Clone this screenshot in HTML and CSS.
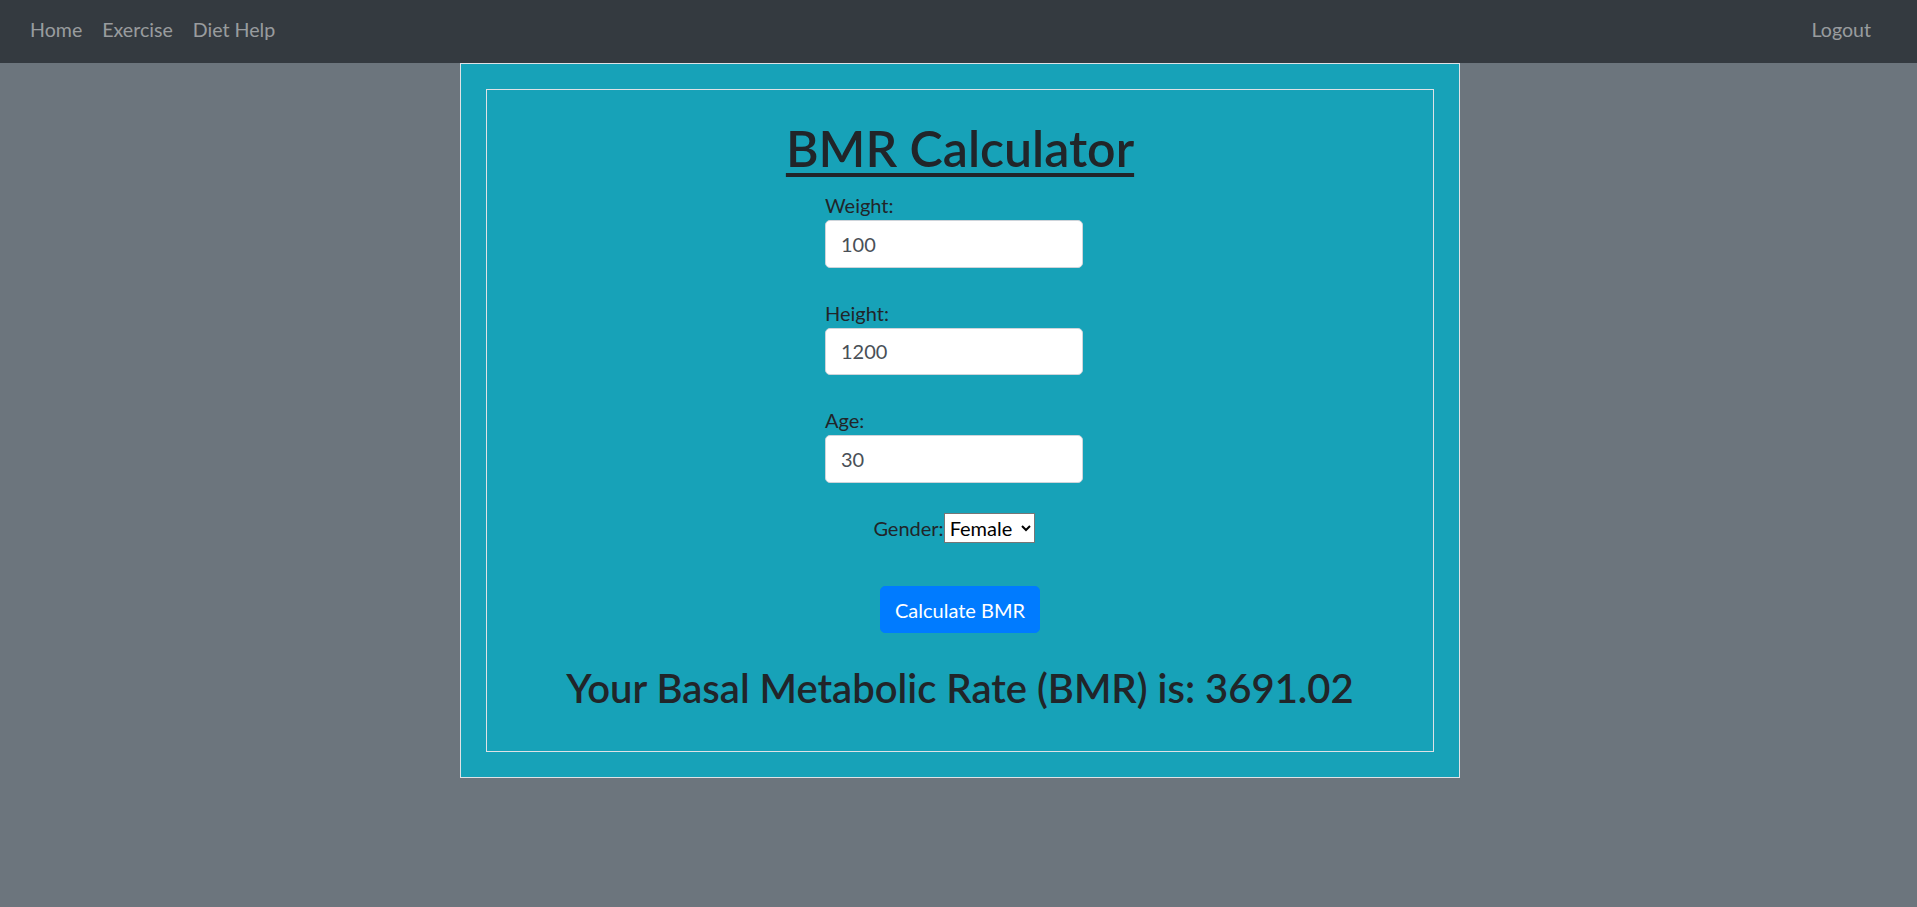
FILE: index.html
```html
<!DOCTYPE html>
<html lang="en">
<head>
<meta charset="utf-8">
<title>BMR Calculator</title>
<link rel="stylesheet" href="styles.css">
</head>
<body>
<nav class="navbar">
  <ul class="nav-left">
    <li><a class="nav-link" href="#">Home</a></li>
    <li><a class="nav-link" href="#">Exercise</a></li>
    <li><a class="nav-link" href="#">Diet Help</a></li>
  </ul>
  <ul class="nav-right">
    <li><a class="nav-link" href="#">Logout</a></li>
  </ul>
</nav>
<main class="page">
  <section class="outer-box">
    <div class="inner-box">
      <h1 class="title">BMR Calculator</h1>
      <form class="bmr-form">
        <div class="fields">
          <label class="field">
            <span class="field-label">Weight:</span>
            <input class="form-control" type="text" value="100">
          </label>
          <label class="field">
            <span class="field-label">Height:</span>
            <input class="form-control" type="text" value="1200">
          </label>
          <label class="field">
            <span class="field-label">Age:</span>
            <input class="form-control" type="text" value="30">
          </label>
          <div class="gender-row">
            <span class="gender-label">Gender:</span><select class="gender-select">
              <option>Female</option>
              <option>Male</option>
            </select>
          </div>
        </div>
        <button class="btn-primary" type="button">Calculate BMR</button>
      </form>
      <h2 class="result">Your Basal Metabolic Rate (BMR) is: 3691.02</h2>
    </div>
  </section>
</main>
</body>
</html>
```
FILE: styles.css
```css
* { box-sizing: border-box; }

html, body {
  margin: 0;
  padding: 0;
}

body {
  background: #6c757d;
  color: #212529;
  font-family: Lato, "Noto Sans", sans-serif;
  font-size: 20px;
  line-height: 1.5;
  min-height: 907px;
}

/* Navbar */
.navbar {
  display: flex;
  justify-content: space-between;
  align-items: flex-start;
  height: 63px;
  padding: 15px 20px 0 20px;
  background: #343a40;
}

.nav-left,
.nav-right {
  display: flex;
  list-style: none;
  margin: 0;
  padding: 0;
}

.nav-right {
  margin-right: 16px;
}

.nav-link {
  display: block;
  padding: 0 10px;
  line-height: 30px;
  font-size: 19.6px;
  color: rgba(255, 255, 255, 0.5);
  text-decoration: none;
}

/* Page */
.page {
  padding-left: 3px;
}

.outer-box {
  width: 1000px;
  height: 715px;
  margin: 0 auto;
  padding: 25px;
  background: #17a2b8;
  border: 1px solid #dee2e6;
}

.inner-box {
  height: 663px;
  border: 1px solid #dee2e6;
  display: flex;
  flex-direction: column;
  align-items: center;
  padding-top: 28px;
}

.title {
  margin: 0 0 12px;
  font-size: 50px;
  font-weight: 600;
  line-height: 60px;
  text-decoration: underline;
  text-decoration-thickness: 4px;
  text-underline-offset: 6px;
}

.bmr-form {
  display: flex;
  flex-direction: column;
  align-items: center;
}

.fields {
  display: flex;
  flex-direction: column;
  width: 258px;
  margin-right: 12px;
}

.field {
  display: flex;
  flex-direction: column;
  margin-bottom: 30px;
}

.field-label {
  line-height: 30px;
}

.form-control {
  display: block;
  width: 258px;
  height: 47.5px;
  padding: 7.5px 15px;
  font-family: inherit;
  font-size: 20px;
  line-height: 30px;
  color: #495057;
  background: #fff;
  border: 1px solid #ced4da;
  border-radius: 5px;
}

.gender-row {
  display: flex;
  justify-content: center;
  align-items: center;
  height: 30px;
  margin-top: 0.5px;
}

.gender-label {
  line-height: 30px;
}

.gender-select {
  width: 91px;
  height: 30px;
  font-family: inherit;
  font-size: 20px;
  font-weight: 400;
  color: #000;
  background: #fff;
  border: 1px solid #767676;
  border-radius: 0;
  padding: 0 0 0 1px;
}

.btn-primary {
  margin-top: 43px;
  height: 47px;
  padding: 0 14px;
  font-family: inherit;
  font-size: 20px;
  line-height: 30px;
  color: #fff;
  background: #007bff;
  border: 1px solid #007bff;
  border-radius: 5px;
}

.result {
  margin: 30.5px 0 0;
  font-size: 40px;
  font-weight: 600;
  line-height: 48px;
  text-align: center;
}
```
